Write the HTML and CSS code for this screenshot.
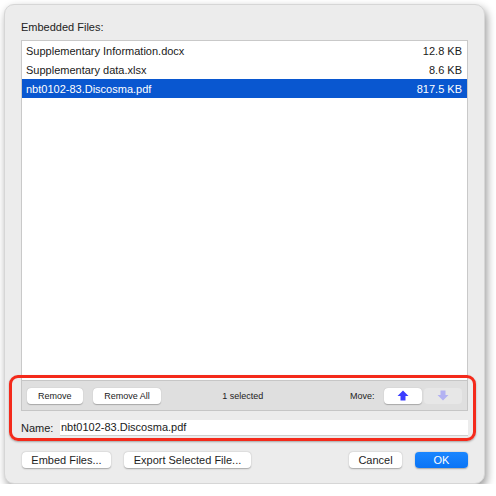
FILE: index.html
```html
<!DOCTYPE html>
<html>
<head>
<meta charset="utf-8">
<link rel="stylesheet" href="styles.css">
</head>
<body>
<div class="window">
  <div class="label">Embedded Files:</div>
  <div class="list">
    <div class="row"><span>Supplementary Information.docx</span><span>12.8 KB</span></div>
    <div class="row"><span>Supplementary data.xlsx</span><span>8.6 KB</span></div>
    <div class="row selected"><span>nbt0102-83.Discosma.pdf</span><span>817.5 KB</span></div>
  </div>
  <div class="toolbar">
    <button class="tbtn btn-remove">Remove</button>
    <button class="tbtn btn-remove-all">Remove All</button>
    <span class="count">1 selected</span>
    <span class="move">Move:</span>
    <button class="tbtn arrow">
      <svg width="12" height="11" viewBox="0 0 12 11"><path d="M6 0.5 L11.5 6 L8.5 6 L8.5 10.5 L3.5 10.5 L3.5 6 L0.5 6 Z" fill="#3a3cff"/></svg>
    </button>
    <button class="tbtn arrow disabled">
      <svg width="12" height="11" viewBox="0 0 12 11"><path d="M6 10.5 L11.5 5 L8.5 5 L8.5 0.5 L3.5 0.5 L3.5 5 L0.5 5 Z" fill="#b3b2f2"/></svg>
    </button>
  </div>
  <div class="name-row">
    <span class="name-label">Name:</span>
    <div class="field">nbt0102-83.Discosma.pdf</div>
  </div>
  <div class="actions">
    <button class="btn btn-embed">Embed Files...</button>
    <button class="btn btn-export">Export Selected File...</button>
    <span class="spacer"></span>
    <button class="btn btn-cancel">Cancel</button>
    <button class="btn primary">OK</button>
  </div>
  <div class="highlight"></div>
</div>
</body>
</html>
```
FILE: styles.css
```css
html, body {
  margin: 0;
  padding: 0;
  background: #ffffff;
}

body {
  font-family: "Liberation Sans", Arial, sans-serif;
  color: #1e1e1e;
}

.window {
  position: relative;
  margin: 4px 0 0 4px;
  width: 481px;
  height: 480px;
  box-sizing: border-box;
  background: #ececec;
  border: 1px solid #d6d6d6;
  border-radius: 10px;
  box-shadow: 2px 4px 9px rgba(0, 0, 0, 0.4);
  padding: 0 16px 0 16px;
  display: flex;
  flex-direction: column;
}

.label {
  font-size: 11px;
  margin-top: 16px;
  height: 19px;
  line-height: 13px;
  color: #222;
}

.list {
  height: 340px;
  background: #fff;
  border: 1px solid #c9c9c9;
  border-bottom: none;
  width: 447px;
  box-sizing: border-box;
}

.row {
  height: 19px;
  display: flex;
  justify-content: space-between;
  align-items: center;
  padding: 0 5px 0 4px;
  font-size: 11px;
  color: #1a1a1a;
}

.row.selected {
  background: #0957d0;
  color: #fff;
}

.toolbar {
  width: 447px;
  height: 31px;
  box-sizing: border-box;
  background: #dfdfdf;
  border: 1px solid #c6c6c6;
  display: flex;
  align-items: center;
  padding: 0 5px;
  font-size: 9px;
}

.tbtn {
  font-family: "Liberation Sans", Arial, sans-serif;
  font-size: 9px;
  color: #222;
  background: #fff;
  border: none;
  border-radius: 4px;
  height: 16px;
  padding: 0;
  box-shadow: 0 0.5px 1px rgba(0, 0, 0, 0.25);
}

.btn-remove { width: 56px; }
.btn-remove-all { width: 69px; margin-left: 10px; }

.count {
  margin-left: 61px;
  width: 44px;
  color: #222;
}

.move {
  margin-left: 84px;
  color: #222;
}

.arrow {
  width: 38px;
  display: flex;
  align-items: center;
  justify-content: center;
  margin-left: 10px;
}

.arrow.disabled {
  margin-left: 2px;
  background: #e7e7e7;
  box-shadow: none;
}

.name-row {
  display: flex;
  align-items: center;
  margin-top: 9px;
  height: 16px;
  font-size: 11px;
}

.name-label {
  width: 39px;
  color: #222;
}

.field {
  width: 408px;
  height: 16px;
  box-sizing: border-box;
  background: #fff;
  border-bottom: 1px solid #cfcfcf;
  line-height: 15px;
  padding-left: 1px;
  color: #1a1a1a;
}

.actions {
  display: flex;
  align-items: center;
  margin-top: 16px;
  height: 16px;
  padding-left: 1px;
}

.btn {
  font-family: "Liberation Sans", Arial, sans-serif;
  font-size: 11px;
  height: 16px;
  padding: 0;
  border: none;
  border-radius: 4px;
  background: #fff;
  color: #1e1e1e;
  box-shadow: 0 0.5px 1.5px rgba(0, 0, 0, 0.3);
}

.btn-embed { width: 89px; }
.btn-export { width: 127px; margin-left: 13px; }
.spacer { flex: 1; }
.btn-cancel { width: 53px; }

.btn.primary {
  width: 53px;
  margin-left: 13px;
  color: #fff;
  background: linear-gradient(#1a86ff, #0a74f5);
}

.highlight {
  position: absolute;
  left: 4px;
  top: 370px;
  width: 461px;
  height: 60px;
  border: 3px solid #f42a1b;
  border-radius: 9px;
  box-shadow: 0 1px 2px rgba(0, 0, 0, 0.3);
  pointer-events: none;
}
```
